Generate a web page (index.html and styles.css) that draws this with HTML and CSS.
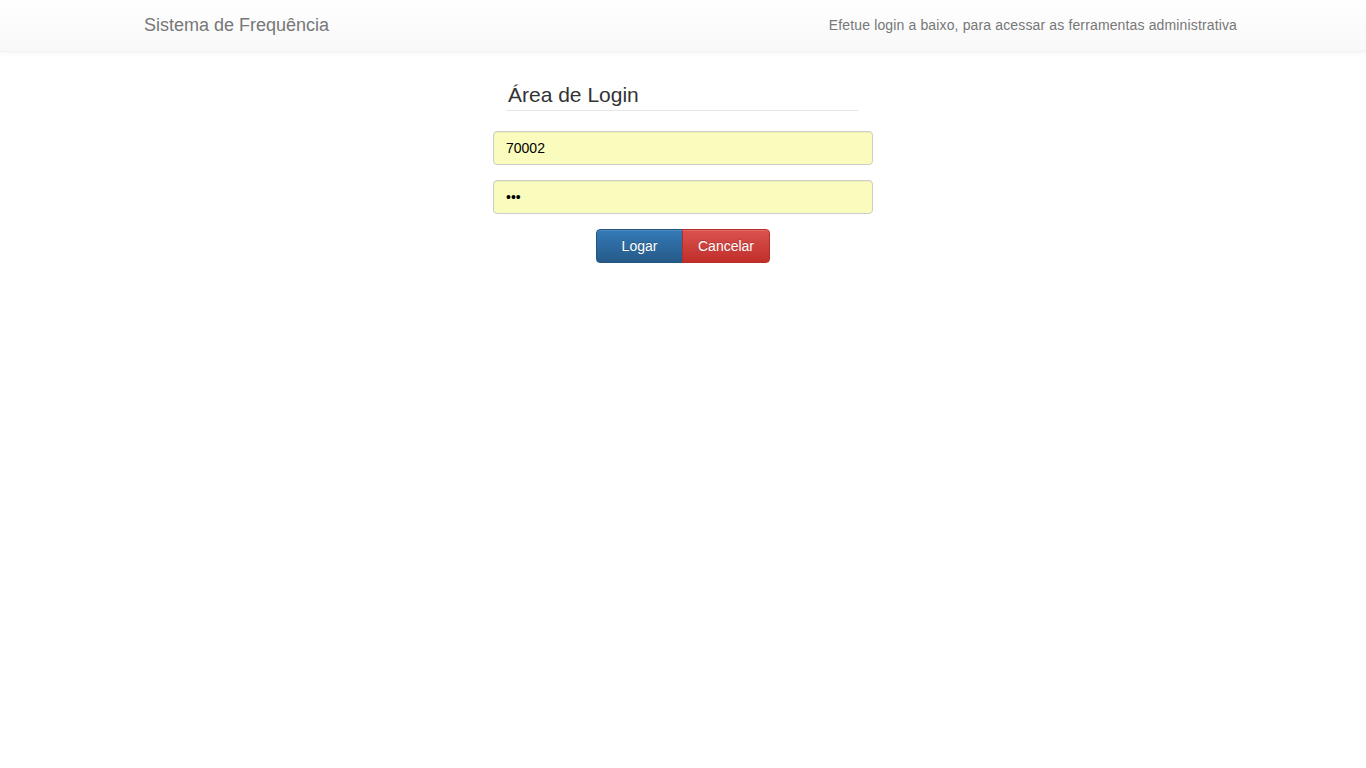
FILE: index.html
```html
<!DOCTYPE html>
<html lang="pt">
<head>
<meta charset="utf-8">
<title>Sistema de Frequência</title>
<link rel="stylesheet" href="styles.css">
</head>
<body>
<nav class="navbar">
  <div class="navbar-inner">
    <a class="brand" href="#">Sistema de Frequência</a>
    <p class="navbar-text">Efetue login a baixo, para acessar as ferramentas administrativa</p>
  </div>
</nav>
<main class="login">
  <form class="login-form">
    <h3 class="legend">Área de Login</h3>
    <input class="field" type="text" value="70002">
    <input class="field" type="password" value="123">
    <div class="btn-group">
      <button type="button" class="btn btn-primary">Logar</button>
      <button type="button" class="btn btn-danger">Cancelar</button>
    </div>
  </form>
</main>
</body>
</html>
```
FILE: styles.css
```css
* { box-sizing: border-box; }
html, body { margin: 0; padding: 0; }
body {
  font-family: "Liberation Sans", Arial, sans-serif;
  font-size: 14px;
  line-height: 1.428571;
  color: #333;
  background: #fff;
}
.navbar {
  height: 52px;
  background: linear-gradient(to bottom, #ffffff 0%, #f8f8f8 100%);
  border-bottom: 1px solid #f2f2f2;
  box-shadow: 0 1px 5px rgba(0,0,0,0.05);
}
.navbar-inner {
  height: 51px;
  padding: 0 129px 0 129px;
  display: flex;
  align-items: center;
  justify-content: space-between;
}
.brand {
  font-size: 18px;
  color: #777;
  text-decoration: none;
  padding: 0 15px;
  line-height: 20px;
  margin-top: -2px;
}
.navbar-text {
  margin: 0;
  color: #777;
  font-size: 14px;
  letter-spacing: 0.14px;
  margin-top: 0;
}
.login {
  display: flex;
  justify-content: center;
  padding-top: 28px;
}
.login-form {
  width: 380px;
  display: flex;
  flex-direction: column;
}
.legend {
  margin: 0 15px 20px 13px;
  padding: 0 0 0 2px;
  font-size: 21px;
  font-weight: normal;
  line-height: 30px;
  color: #333;
  border-bottom: 1px solid #e5e5e5;
}
.field {
  display: block;
  width: 100%;
  height: 34px;
  padding: 6px 12px;
  font-family: "Liberation Sans", Arial, sans-serif;
  font-size: 14px;
  color: #000;
  background: #fafcbd;
  border: 1px solid #cccccc;
  border-radius: 4px;
  box-shadow: inset 0 1px 1px rgba(0,0,0,0.05);
  margin-bottom: 15px;
  outline: none;
}
.btn-group {
  display: flex;
  justify-content: center;
}
.btn {
  font-family: "Liberation Sans", Arial, sans-serif;
  font-size: 14px;
  line-height: 20px;
  padding: 6px 12px;
  height: 34px;
  color: #fff;
  border: 1px solid transparent;
  cursor: pointer;
  text-shadow: 0 -1px 0 rgba(0,0,0,0.2);
  box-shadow: inset 0 1px 0 rgba(255,255,255,0.15), 0 1px 1px rgba(0,0,0,0.075);
}
.btn-primary {
  width: 87px;
  background: linear-gradient(to bottom, #337ab7 0%, #265a88 100%);
  border-color: #245580;
  border-radius: 4px 0 0 4px;
}
.btn-danger {
  width: 88px;
  background: linear-gradient(to bottom, #d9534f 0%, #c12e2a 100%);
  border-color: #b92c28;
  border-radius: 0 4px 4px 0;
  margin-left: -1px;
}
```
